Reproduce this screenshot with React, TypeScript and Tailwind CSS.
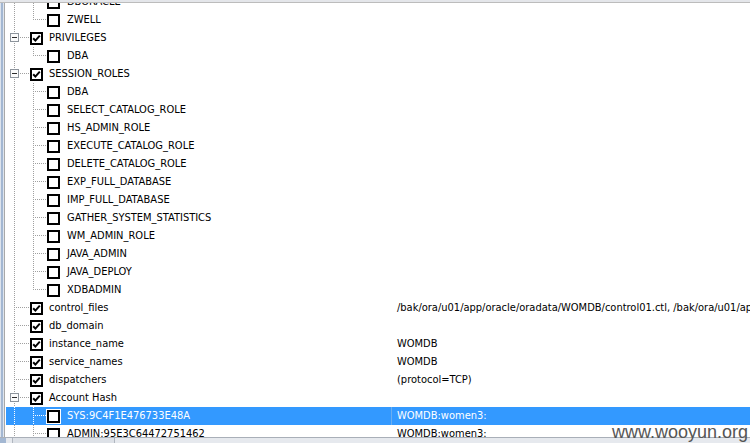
import React from "react";

type Row = {
  label: string;
  level: 0 | 1;
  checked?: boolean;
  expanded?: boolean;
  last?: boolean;
  value?: string;
  selected?: boolean;
};

const rows: Row[] = [
  { label: "DBORACLE", level: 1 },
  { label: "ZWELL", level: 1, last: true },
  { label: "PRIVILEGES", level: 0, checked: true, expanded: true },
  { label: "DBA", level: 1, last: true },
  { label: "SESSION_ROLES", level: 0, checked: true, expanded: true },
  { label: "DBA", level: 1 },
  { label: "SELECT_CATALOG_ROLE", level: 1 },
  { label: "HS_ADMIN_ROLE", level: 1 },
  { label: "EXECUTE_CATALOG_ROLE", level: 1 },
  { label: "DELETE_CATALOG_ROLE", level: 1 },
  { label: "EXP_FULL_DATABASE", level: 1 },
  { label: "IMP_FULL_DATABASE", level: 1 },
  { label: "GATHER_SYSTEM_STATISTICS", level: 1 },
  { label: "WM_ADMIN_ROLE", level: 1 },
  { label: "JAVA_ADMIN", level: 1 },
  { label: "JAVA_DEPLOY", level: 1 },
  { label: "XDBADMIN", level: 1, last: true },
  {
    label: "control_files",
    level: 0,
    checked: true,
    value:
      "/bak/ora/u01/app/oracle/oradata/WOMDB/control01.ctl, /bak/ora/u01/app/oracle/oradata/WOMDB/control02.ctl",
  },
  { label: "db_domain", level: 0, checked: true },
  { label: "instance_name", level: 0, checked: true, value: "WOMDB" },
  { label: "service_names", level: 0, checked: true, value: "WOMDB" },
  { label: "dispatchers", level: 0, checked: true, value: "(protocol=TCP)" },
  { label: "Account Hash", level: 0, checked: true, expanded: true },
  { label: "SYS:9C4F1E476733E48A", level: 1, selected: true, value: "WOMDB:women3:" },
  { label: "ADMIN:95E3C64472751462", level: 1, value: "WOMDB:women3:" },
];

function Guides({ row }: { row: Row }) {
  const c = row.selected ? "#ffffff" : "#a0a0a0";
  const w = row.level === 1 ? 41 : 24;
  return (
    <svg width={w} height={18} className="shrink-0" shapeRendering="crispEdges">
      <line x1={8.5} y1={0} x2={8.5} y2={18} stroke={c} strokeDasharray="1 1" />
      {row.level === 0 && !row.expanded && (
        <line x1={10} y1={8.5} x2={23} y2={8.5} stroke={c} strokeDasharray="1 1" />
      )}
      {row.level === 0 && row.expanded && (
        <>
          <line x1={14} y1={8.5} x2={23} y2={8.5} stroke={c} strokeDasharray="1 1" />
          <rect x={4.5} y={4.5} width={8} height={8} fill="#fbfbfb" stroke="#8d949c" />
          <line x1={6} y1={8.5} x2={11} y2={8.5} stroke="#2b2b2b" />
        </>
      )}
      {row.level === 1 && (
        <>
          <line
            x1={27.5}
            y1={0}
            x2={27.5}
            y2={row.last ? 9 : 18}
            stroke={c}
            strokeDasharray="1 1"
          />
          <line x1={29} y1={8.5} x2={40} y2={8.5} stroke={c} strokeDasharray="1 1" />
        </>
      )}
    </svg>
  );
}

function CheckBox({ checked, selected }: { checked?: boolean; selected?: boolean }) {
  return (
    <div
      className={
        "flex h-[13px] w-[13px] shrink-0 items-center justify-center border-2 border-black bg-white" +
        (selected ? " outline outline-1 outline-white" : "")
      }
    >
      {checked && (
        <svg width={9} height={9} viewBox="0 0 9 9">
          <path d="M1.2 4.2 L3.4 6.6 L7.8 1.6" fill="none" stroke="#000" strokeWidth={2} />
        </svg>
      )}
    </div>
  );
}

function TreeRow({ row }: { row: Row }) {
  return (
    <div
      className={
        "flex h-[18px] items-center whitespace-nowrap " +
        (row.selected ? "bg-[#3399ff] text-white" : "text-black")
      }
    >
      <div className="flex w-[385px] shrink-0 items-center overflow-hidden">
        <Guides row={row} />
        <CheckBox checked={row.checked} selected={row.selected} />
        <span className={row.level === 1 ? "ml-[7px]" : "ml-[6px]"}>{row.label}</span>
      </div>
      <div className={"h-[18px] w-[1px] shrink-0 " + (row.selected ? "bg-[#6aaef0]" : "")} />
      <div className="pl-[5px]">{row.value ?? ""}</div>
    </div>
  );
}

export default function App() {
  return (
    <div
      className="relative flex h-[443px] w-[750px] flex-col overflow-hidden bg-white text-[11px] leading-[18px]"
      style={{ fontFamily: '"DejaVu Sans Condensed", "DejaVu Sans", sans-serif', fontStretch: "condensed" }}
    >
      <div className="h-[3px] shrink-0 border-b border-[#bcbcbc] bg-[#e4e6ea]" />
      <div className="flex min-h-0 flex-1">
        <div className="flex w-[6px] shrink-0">
          <div className="w-[1px] bg-[#dde3ec]" />
          <div className="w-[2px] bg-[#a3b7d2]" />
          <div className="w-[1px] bg-[#dfe5ee]" />
          <div className="w-[1px] bg-[#a9a9a9]" />
          <div className="w-[1px] bg-white" />
        </div>
        <div className="min-w-0 flex-1 overflow-hidden">
          <div className="-mt-[10px]">
            {rows.map((r, i) => (
              <TreeRow key={i} row={r} />
            ))}
          </div>
        </div>
      </div>
      <div className="flex h-[6px] shrink-0 border-t border-[#a9afb8] bg-[#e6e9ee]">
        <div className="w-[6px] bg-[#a3b7d2]" />
        <div className="w-[7px] border-r border-[#b0b6bf]" />
        <div className="w-[102px] border-r border-[#b0b6bf] bg-[#dde1e7]" />
        <div className="flex-1" />
      </div>
      <div
        className="absolute right-[2px] top-[423px] text-[18px] leading-[18px] text-[#555555]"
        style={{ fontFamily: '"Liberation Sans", Arial, sans-serif', fontStretch: "normal" }}
      >
        www.wooyun.org
      </div>
    </div>
  );
}
